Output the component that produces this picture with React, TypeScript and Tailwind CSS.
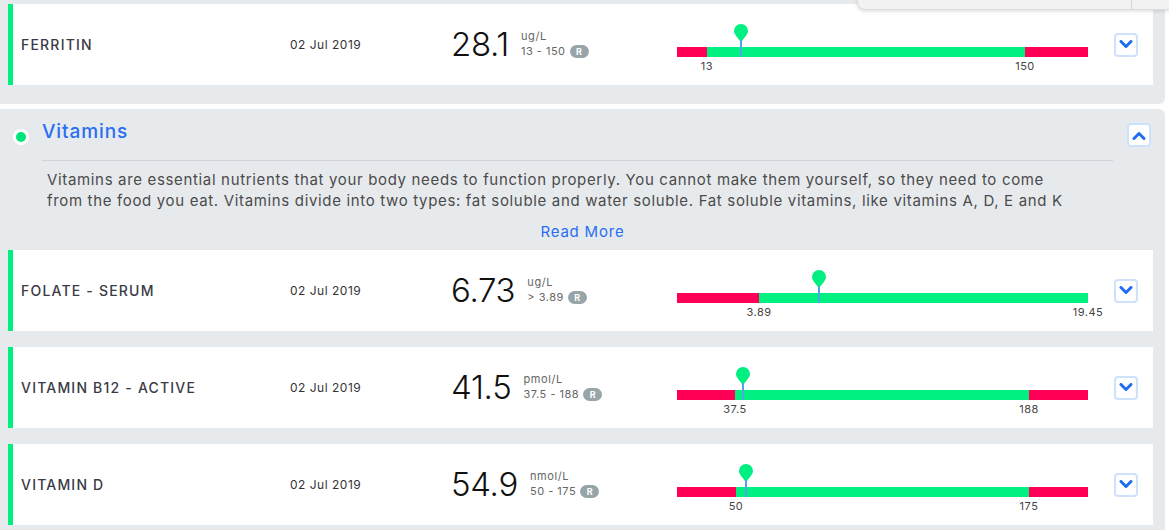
import React from 'react';

interface Seg {
  w: number;
  color: 'red' | 'green';
}

interface Row {
  name: string;
  date: string;
  value: string;
  unit: string;
  range: string;
  segs: Seg[];
  labels: { text: string; at: number }[];
  marker: number;
}

const ferritin: Row = {
  name: 'Ferritin',
  date: '02 Jul 2019',
  value: '28.1',
  unit: 'ug/L',
  range: '13 - 150',
  segs: [
    { w: 30, color: 'red' },
    { w: 318, color: 'green' },
    { w: 63, color: 'red' },
  ],
  labels: [
    { text: '13', at: 30 },
    { text: '150', at: 348 },
  ],
  marker: 64,
};

const vitamins: Row[] = [
  {
    name: 'Folate - Serum',
    date: '02 Jul 2019',
    value: '6.73',
    unit: 'ug/L',
    range: '> 3.89',
    segs: [
      { w: 82, color: 'red' },
      { w: 329, color: 'green' },
    ],
    labels: [
      { text: '3.89', at: 82 },
      { text: '19.45', at: 411 },
    ],
    marker: 142,
  },
  {
    name: 'Vitamin B12 - Active',
    date: '02 Jul 2019',
    value: '41.5',
    unit: 'pmol/L',
    range: '37.5 - 188',
    segs: [
      { w: 58, color: 'red' },
      { w: 294, color: 'green' },
      { w: 59, color: 'red' },
    ],
    labels: [
      { text: '37.5', at: 58 },
      { text: '188', at: 352 },
    ],
    marker: 66,
  },
  {
    name: 'Vitamin D',
    date: '02 Jul 2019',
    value: '54.9',
    unit: 'nmol/L',
    range: '50 - 175',
    segs: [
      { w: 59, color: 'red' },
      { w: 293, color: 'green' },
      { w: 59, color: 'red' },
    ],
    labels: [
      { text: '50', at: 59 },
      { text: '175', at: 352 },
    ],
    marker: 69,
  },
];

function Chevron({ up = false }: { up?: boolean }) {
  return (
    <button
      type="button"
      className="flex h-6 w-6 items-center justify-center rounded-[4px] border-2 border-[#cde3fc] bg-white"
    >
      <svg viewBox="0 0 14 9" className="h-[9px] w-[14px]" fill="none">
        <path
          d={up ? 'M2 7.5 7 2.5l5 5' : 'M2 1.5l5 5 5-5'}
          stroke="#1f6ef2"
          strokeWidth="3"
          strokeLinecap="round"
          strokeLinejoin="round"
        />
      </svg>
    </button>
  );
}

function RangeBar({ row }: { row: Row }) {
  return (
    <div className="relative mt-[6px] h-[47px] w-[411px]">
      {/* pin marker */}
      <div
        className="absolute top-0 flex -translate-x-1/2 flex-col items-center"
        style={{ left: row.marker }}
      >
        <svg viewBox="0 0 14 19" className="h-[19px] w-[14px]">
          <path
            d="M7 0a7 7 0 0 1 7 7c0 3.6-3.8 6.4-7 11.5C3.8 13.4 0 10.6 0 7a7 7 0 0 1 7-7z"
            fill="#00ef80"
          />
        </svg>
      </div>
      <div className="absolute left-0 top-[23px] flex h-[10px] w-full">
        {row.segs.map((s, i) => (
          <div
            key={i}
            className={s.color === 'red' ? 'h-full bg-[#ff0056]' : 'h-full bg-[#00f081]'}
            style={{ width: s.w }}
          />
        ))}
      </div>
      {/* marker line over the bar */}
      <div
        className="absolute top-[16px] h-[17px] w-[2px] -translate-x-1/2 bg-[#4ea6e2]"
        style={{ left: row.marker }}
      />
      {row.labels.map((l) => (
        <span
          key={l.text}
          className="absolute top-[35px] -translate-x-1/2 text-[11px] leading-[14px] tracking-[0.5px] text-[#444]"
          style={{ left: l.at }}
        >
          {l.text}
        </span>
      ))}
    </div>
  );
}

function ResultCard({ row }: { row: Row }) {
  return (
    <div className="flex h-[81px] items-center border-l-[5px] border-[#00ef80] bg-white pl-[8px] pr-[15px]">
      <div className="w-[269px] text-[14px] font-medium uppercase tracking-[1.2px] text-[#3a3a46]">
        {row.name}
      </div>
      <div className="w-[161px] text-[12px] tracking-[0.5px] text-[#333]">{row.date}</div>
      <div className="flex w-[226px] items-center">
        <span className="text-[33px] font-light leading-none tracking-[-0.3px] text-[#111]">
          {row.value}
        </span>
        <div className="ml-[12px] mt-[-2px] flex flex-col">
          <span className="text-[11px] leading-[16px] tracking-[0.6px] text-[#666]">{row.unit}</span>
          <div className="flex items-center gap-[4px]">
            <span className="text-[11px] leading-[15px] tracking-[0.5px] text-[#666]">{row.range}</span>
            <span className="flex h-[13px] w-[19px] items-center justify-center rounded-full bg-[#97a5a9] text-[9px] font-bold text-white">
              R
            </span>
          </div>
        </div>
      </div>
      <RangeBar row={row} />
      <div className="ml-[26px]">
        <Chevron />
      </div>
    </div>
  );
}

export default function App() {
  return (
    <div
      className="relative min-h-[530px] w-[1169px] overflow-hidden bg-white"
      style={{ fontFamily: 'Inter, "Liberation Sans", sans-serif' }}
    >
      {/* top popup edge */}
      <div className="absolute left-[857px] top-0 z-10 flex h-[10px] w-[312px] rounded-bl-lg border-b border-l border-[#dcdcdc] bg-[#f2f2f2] shadow-[0_1px_4px_rgba(0,0,0,0.15)]">
        <div className="ml-[273px] h-full border-l border-[#d8d8d8]" />
      </div>

      {/* previous section */}
      <div className="mr-[4px] rounded-br-md bg-[#e7eaed] pb-[19px] pl-[8px] pr-[12px] pt-[4px]">
        <ResultCard row={ferritin} />
      </div>

      {/* vitamins section */}
      <div className="mr-[4px] mt-[5px] rounded-tr-md bg-[#e7eaed] pb-[20px] pt-[11px]">
        <div className="flex h-[24px] items-start pl-[13px] pr-[14px]">
          <div className="mt-[9px] flex h-[16px] w-[16px] items-center justify-center rounded-full bg-white">
            <div className="h-[10px] w-[10px] rounded-full bg-[#00e47a]" />
          </div>
          <h2 className="ml-[13px] text-[19px] font-medium leading-[24px] tracking-[0.9px] text-[#2a6ef2]">
            Vitamins
          </h2>
          <div className="ml-auto mt-[3px]">
            <Chevron up />
          </div>
        </div>
        <div className="ml-[42px] mr-[52px] mt-[16px] border-t border-[#cfd3d7]" />
        <div className="mt-[8px] pl-[47px] pr-[50px] text-[15px] leading-[21px] tracking-[0.66px] text-[#4b4b4b]">
          <div className="overflow-hidden whitespace-nowrap">
            Vitamins are essential nutrients that your body needs to function properly. You cannot make them yourself, so they need to come
          </div>
          <div className="overflow-hidden whitespace-nowrap">
            from the food you eat. Vitamins divide into two types: fat soluble and water soluble. Fat soluble vitamins, like vitamins A, D, E and K
          </div>
        </div>
        <div className="mt-[10px] text-center text-[15px] leading-[21px] tracking-[0.8px] text-[#2a6ef2]">
          Read More
        </div>
        <div className="mt-[8px] flex flex-col gap-4 pl-[8px] pr-[12px]">
          {vitamins.map((r) => (
            <ResultCard key={r.name} row={r} />
          ))}
        </div>
      </div>
    </div>
  );
}
